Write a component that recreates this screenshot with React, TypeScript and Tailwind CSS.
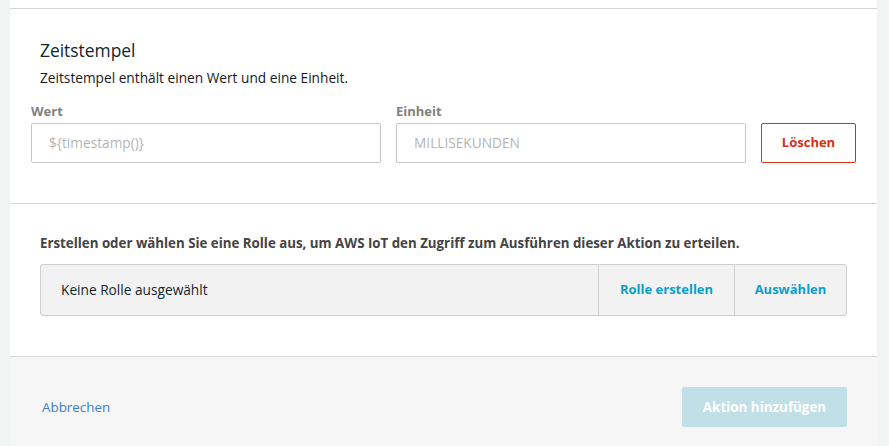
import React from 'react';

const font = { fontFamily: '"Open Sans", "Liberation Sans", sans-serif' };

const App: React.FC = () => {
    return (
        <div className="w-[889px] h-[446px] flex bg-[#f2f3f3] overflow-hidden" style={font}>
            {/* left gutter */}
            <div className="w-[10px] shrink-0"></div>

            <div className="w-[867px] shrink-0 flex flex-col">
                <div className="h-[9px] bg-white border-b border-[#d5d5d5]"></div>

                {/* Zeitstempel */}
                <section className="h-[195px] bg-white border-b border-[#d5d5d5] px-[21px] pt-[29px]">
                    <h2 className="ml-[9px] text-[17.4px] leading-[24px] text-[#10262e]">Zeitstempel</h2>
                    <p className="ml-[9px] mt-[6px] text-[13.7px] leading-[20px] text-[#16191f]">
                        Zeitstempel enthält einen Wert und eine Einheit.
                    </p>
                    <div className="mt-[13px] flex items-end gap-[15px]">
                        <label className="w-[350px] flex flex-col">
                            <span className="text-[13px] leading-[20px] font-bold text-[#808080] mb-[2px]">Wert</span>
                            <div className="h-[40px] border border-[#c6c6c6] rounded-[2px] px-[17px] flex items-center text-[13.7px] text-[#b5b5b5]">
                                {'${timestamp()}'}
                            </div>
                        </label>
                        <label className="w-[350px] flex flex-col">
                            <span className="text-[13px] leading-[20px] font-bold text-[#808080] mb-[2px]">Einheit</span>
                            <div className="h-[40px] border border-[#c6c6c6] rounded-[2px] px-[17px] flex items-center text-[13.7px] text-[#b5b5b5]">
                                MILLISEKUNDEN
                            </div>
                        </label>
                        <button className="w-[95px] h-[40px] border border-[#d13212] rounded-[2px] text-[13px] font-bold text-[#d13212] bg-white">
                            Löschen
                        </button>
                    </div>
                </section>

                {/* Rolle */}
                <section className="h-[153px] bg-white border-b border-[#d5d5d5] pl-[30px] pr-[30px] pt-[29px]">
                    <p className="text-[13.3px] leading-[20px] font-bold text-[#444444]">
                        Erstellen oder wählen Sie eine Rolle aus, um AWS IoT den Zugriff zum Ausführen dieser Aktion zu erteilen.
                    </p>
                    <div className="mt-[11px] h-[52px] w-[807px] flex items-stretch bg-[#f2f2f2] border border-[#cfcfcf] rounded-[3px] text-[13px]">
                        <div className="flex-1 flex items-center pl-[20px] text-[13.7px] text-[#10262e]">Keine Rolle ausgewählt</div>
                        <button className="w-[136px] border-l border-[#cfcfcf] font-bold text-[#0a9fcb]">Rolle erstellen</button>
                        <button className="w-[112px] border-l border-[#cfcfcf] font-bold text-[#0a9fcb]">Auswählen</button>
                    </div>
                </section>

                {/* Footer */}
                <footer className="flex-1 bg-[#f6f6f6] flex items-start justify-between pl-[32px] pr-[30px] pt-[30px]">
                    <a className="h-[40px] flex items-center text-[13.4px] text-[#3a7fc3]">Abbrechen</a>
                    <button className="w-[165px] h-[40px] rounded-[2px] bg-[#c1dfe6] text-white font-bold text-[13.4px]">
                        Aktion hinzufügen
                    </button>
                </footer>
            </div>

            {/* right gutter */}
            <div className="flex-1"></div>
        </div>
    );
};

export default App;
